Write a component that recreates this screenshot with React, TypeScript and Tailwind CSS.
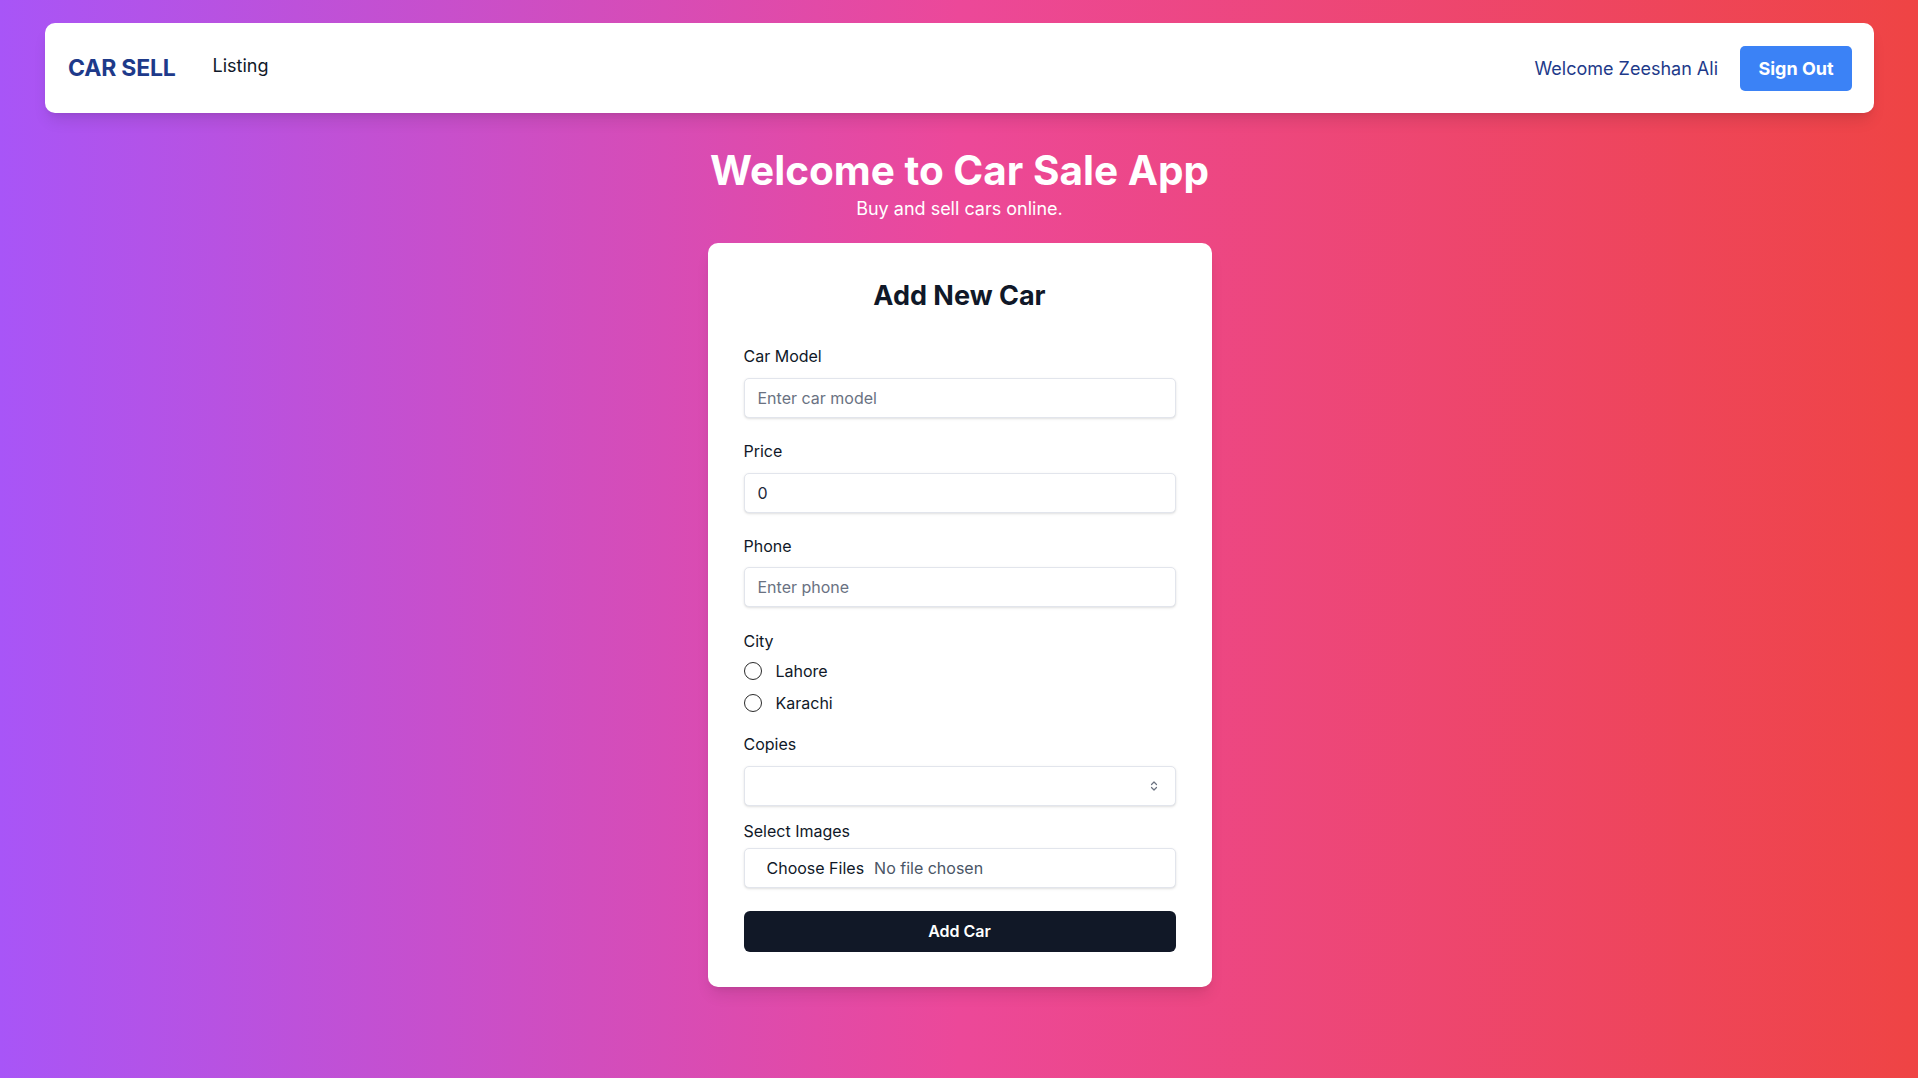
import React from 'react';

const Label = ({ children, className = '' }: { children: React.ReactNode; className?: string }) => (
    <label className={`block text-[16px] leading-[24px] text-gray-900 ${className}`}>{children}</label>
);

const inputCls =
    'block w-full h-[40px] rounded-[5px] border border-[#e2e5ec] bg-white px-[13px] text-[16px] text-gray-800 placeholder:text-gray-500 shadow-sm outline-none';

const App: React.FC = () => {
    return (
        <div className="min-h-screen bg-[linear-gradient(to_right,#a855f7,#ec4899,#ef4444)] pl-[45px] pr-[44px] pt-[23px] pb-[40px] font-['Inter',sans-serif]">
            {/* Navbar */}
            <nav className="flex h-[90px] items-center justify-between rounded-[10px] bg-white pl-[23px] pr-[22px] shadow-lg">
                <div className="flex items-center">
                    <span className="text-[23px] font-bold tracking-[-0.2px] text-[#1e3a8a]">CAR SELL</span>
                    <a href="#" className="ml-[37px] mb-[6px] text-[18px] text-gray-900">Listing</a>
                </div>
                <div className="flex items-center">
                    <span className="text-[18px] text-[#1e3a8a]">Welcome Zeeshan Ali</span>
                    <button className="ml-[22px] h-[45px] w-[112px] rounded-[5px] bg-[#3b82f6] text-[18px] font-bold text-white">
                        Sign Out
                    </button>
                </div>
            </nav>

            {/* Hero */}
            <div className="mt-[34px] text-center text-white">
                <h1 className="text-[40.5px] font-bold leading-[48px]">Welcome to Car Sale App</h1>
                <p className="text-[18px] leading-[28px]">Buy and sell cars online.</p>
            </div>

            {/* Form card */}
            <form
                className="mx-auto mt-[20px] w-[504px] rounded-[10px] bg-white px-[36px] pt-[35px] pb-[35px] shadow-lg"
                onSubmit={(e) => e.preventDefault()}
            >
                <h2 className="text-center text-[27px] font-bold leading-[36px] text-gray-900">Add New Car</h2>

                <Label className="mt-[30px]">Car Model</Label>
                <input className={`${inputCls} mt-[10px]`} placeholder="Enter car model" />

                <Label className="mt-[21px]">Price</Label>
                <input className={`${inputCls} mt-[10px]`} type="number" defaultValue={0} />

                <Label className="mt-[21px]">Phone</Label>
                <input className={`${inputCls} mt-[9px]`} placeholder="Enter phone" />

                <Label className="mt-[22px]">City</Label>
                <div className="mt-[6px] flex flex-col gap-[7.5px]">
                    {['Lahore', 'Karachi'].map((city) => (
                        <label key={city} className="flex h-[24px] items-center text-[16px] text-gray-900">
                            <input
                                type="radio"
                                name="city"
                                value={city}
                                className="h-[18px] w-[18px] appearance-none rounded-full border-[1.5px] border-[#2b2b2b] bg-white"
                            />
                            <span className="ml-[14px]">{city}</span>
                        </label>
                    ))}
                </div>

                <Label className="mt-[17px]">Copies</Label>
                <div className="relative mt-[10px]">
                    <select className={`${inputCls} appearance-none`} defaultValue="">
                        <option value=""></option>
                        <option value="1">1</option>
                        <option value="2">2</option>
                        <option value="3">3</option>
                    </select>
                    <svg
                        className="pointer-events-none absolute right-[18px] top-1/2 -translate-y-1/2"
                        width="8"
                        height="12"
                        viewBox="0 0 8 12"
                        fill="none"
                        stroke="#6b7280"
                        strokeWidth="1.2"
                        strokeLinecap="round"
                        strokeLinejoin="round"
                    >
                        <path d="M1.5 4.5 4 2l2.5 2.5" />
                        <path d="M1.5 7.5 4 10l2.5-2.5" />
                    </svg>
                </div>

                <Label className="mt-[13px]">Select Images</Label>
                <input
                    type="file"
                    multiple
                    className="mt-[5px] block h-[40px] w-full rounded-[5px] border border-[#e2e5ec] bg-white pl-[22px] text-[16px] leading-[38px] text-gray-600 shadow-sm file:mr-[10px] file:border-0 file:bg-transparent file:font-['Inter',sans-serif] file:text-[16px] file:text-gray-900"
                />

                <button
                    type="submit"
                    className="mt-[23px] block h-[41px] w-full rounded-[6px] bg-[#111827] text-[16px] font-semibold text-white"
                >
                    Add Car
                </button>
            </form>
        </div>
    );
};

export default App;
